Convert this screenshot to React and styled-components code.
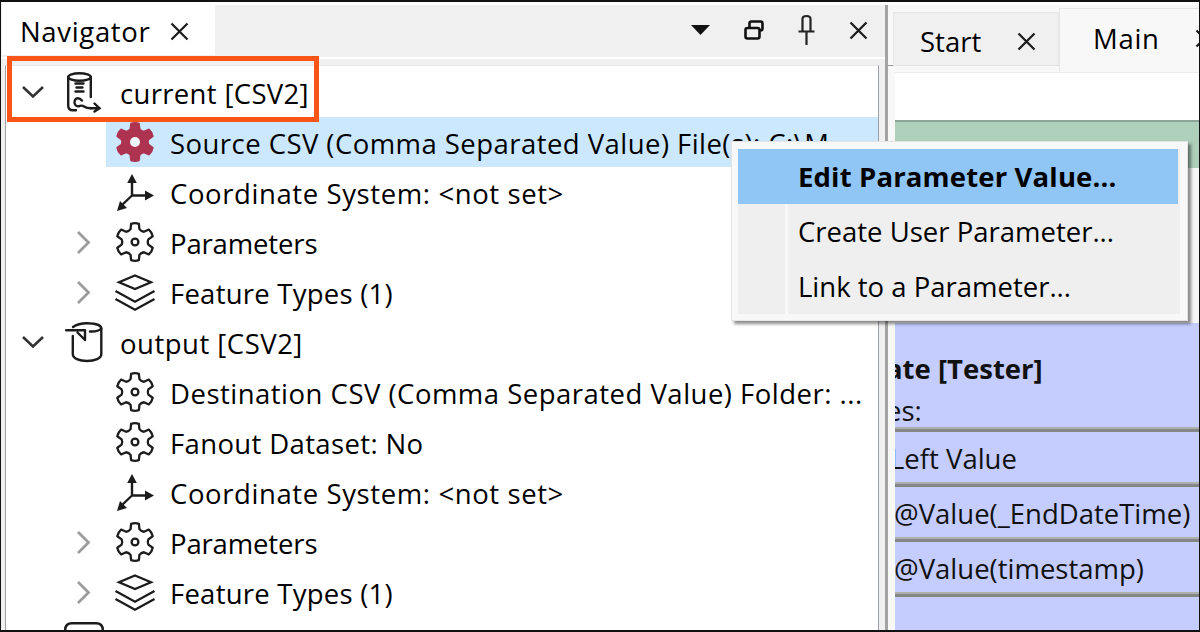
import React from "react";
import styled, { createGlobalStyle } from "styled-components";

const Global = createGlobalStyle`
  html, body { margin: 0; padding: 0; background: #fff; }
  #root { width: 1200px; height: 632px; overflow: hidden; }
`;

const Screen = styled.div`
  position: relative;
  box-sizing: border-box;
  width: 1200px;
  height: 632px;
  overflow: hidden;
  display: flex;
  border-top: 2px solid #111;
  border-left: 1px solid #111;
  border-right: 1px solid #111;
  border-bottom: 2px solid #111;
  background: #fff;
  font-family: "Open Sans", "Noto Sans", sans-serif;
  font-size: 27.5px;
  color: #000;
`;

const LeftPanel = styled.section`
  width: 884px;
  flex: none;
  margin-top: 3px;
  display: flex;
  flex-direction: column;
  background: #f0f0f0;
`;

const DockBar = styled.header`
  height: 50px;
  flex: none;
  display: flex;
  padding-left: 1px;
`;

const NavTab = styled.div`
  width: 213px;
  height: 50px;
  display: flex;
  align-items: center;
  padding: 3px 0 0 18px;
  box-sizing: border-box;
  background: #fff;
  gap: 20px;
  letter-spacing: 0.66px;
`;

const DockTools = styled.div`
  margin-left: auto;
  display: flex;
  align-items: center;
  padding-right: 17px;
  gap: 34px;
`;

const Hairline = styled.div`
  height: 2px;
  flex: none;
  margin-top: 2px;
  background: #fff;
`;

const TreeFrame = styled.div`
  flex: 1;
  min-height: 0;
  margin: 6px 6px 0 4px;
  border-left: 1px solid #a0a0a0;
  border-top: 1px solid #e8e8e8;
  border-right: 1px solid #9aa0a6;
  background: #fff;
  padding-top: 1px;
`;

const Row = styled.div`
  height: 50px;
  display: flex;
  align-items: center;
  white-space: nowrap;
  padding-left: ${(p) => p.$indent}px;
`;

const Expander = styled.span`
  width: 38px;
  height: 50px;
  flex: none;
  display: flex;
  align-items: center;
  justify-content: center;
`;

const RowBody = styled.div`
  height: 50px;
  flex: 1;
  min-width: 0;
  display: flex;
  align-items: center;
  background: ${(p) => (p.$selected ? "#cce8ff" : "transparent")};
  padding-left: ${(p) => p.$pad || 0}px;
`;

const IconSlot = styled.span`
  width: ${(p) => p.$w}px;
  flex: none;
  display: flex;
  align-items: center;
`;

const Label = styled.span`
  white-space: nowrap;
  padding-top: 3px;
  letter-spacing: ${(p) => p.$track || 0}px;
`;

const Splitter = styled.div`
  width: 3px;
  flex: none;
  margin-top: 3px;
  background: #a3a3a3;
`;

const RightPanel = styled.section`
  flex: 1;
  min-width: 0;
  margin-top: 3px;
  display: flex;
  flex-direction: column;
  background: #f8f8f8;
  overflow: hidden;
`;

const TabStrip = styled.div`
  height: 61px;
  flex: none;
  box-sizing: border-box;
  display: flex;
  align-items: flex-end;
  padding-left: 5px;
  border-bottom: 1px solid #e2e2e2;
`;

const TabNotch = styled.span`
  flex: none;
  width: 5px;
  height: 1px;
  margin: 0 0 -1px -5px;
  background: #999;
`;

const StartTab = styled.div`
  width: 166px;
  height: 53px;
  box-sizing: border-box;
  flex: none;
  background: #f0f0f0;
  border: 1px solid #e6e6e6;
  border-bottom: 0;
  display: flex;
  align-items: center;
  padding: 5px 0 0 26px;
  gap: 36px;
`;

const MainTab = styled.div`
  flex: 1;
  height: 64px;
  margin-bottom: -7px;
  position: relative;
  box-sizing: border-box;
  background: #f8f8f8;
  border-left: 1px solid #e6e6e6;
  border-top: 1px solid #e6e6e6;
  display: flex;
  align-items: center;
  padding: 0 0 5px 33px;
  gap: 35px;
  white-space: nowrap;
  letter-spacing: 0.7px;
`;

const Canvas = styled.div`
  flex: 1;
  min-height: 0;
  margin: 6px 0 0 7px;
  background: #fff;
  display: flex;
  flex-direction: column;
  overflow: hidden;
  box-shadow: inset 0 1px 0 #ececec;
`;

const Gap = styled.div`
  height: 48px;
  flex: none;
`;

const GreenBar = styled.div`
  height: 48px;
  box-sizing: border-box;
  flex: none;
  background: #aecfba;
  border-top: 2px solid #8aa595;
`;

const PaleBand = styled.div`
  height: 155px;
  flex: none;
  background: #f6f6f6;
`;

const Transformer = styled.div`
  flex: 1;
  min-height: 0;
  background: #c4cdfe;
  color: #111;
  white-space: nowrap;
`;

const TransTitle = styled.div`
  margin: 27px 0 0 -9px;
  height: 38px;
  line-height: 38px;
  font-weight: 700;
`;

const TransSub = styled.div`
  margin: 6px 0 0 -9px;
  height: 33px;
  line-height: 33px;
`;

const TransRow = styled.div`
  height: 55px;
  box-sizing: border-box;
  border-top: 2px solid #aeaeae;
  box-shadow: inset 0 3px 0 #868686;
  display: flex;
  align-items: center;
  padding-top: 6px;
`;

const TransText = styled.span`
  margin-left: ${(p) => p.$shift}px;
`;

const LastRule = styled.div`
  height: 3px;
  border-top: 2px solid #aeaeae;
  background: #868686;
`;

const Callout = styled.div`
  position: absolute;
  left: 6px;
  top: 54px;
  width: 312px;
  height: 66px;
  box-sizing: border-box;
  border: 5px solid #fa5517;
  pointer-events: none;
`;

const Menu = styled.div`
  position: absolute;
  left: 730px;
  top: 139px;
  width: 457px;
  height: 180px;
  box-sizing: border-box;
  background: #f8f8f8;
  border: 1px solid #e4e4e4;
  box-shadow: 3px 3px 3px rgba(0, 0, 0, 0.45);
  padding: 7px 7px 6px 6px;
`;

const MenuInner = styled.div`
  height: 100%;
  background: #efefef;
  position: relative;
`;

const MenuGutter = styled.div`
  position: absolute;
  left: 47px;
  top: 0;
  bottom: 0;
  width: 3px;
  background: #f8f8f8;
`;

const MenuItem = styled.div`
  position: relative;
  height: 55px;
  display: flex;
  align-items: center;
  padding-left: 60px;
  box-sizing: border-box;
  width: ${(p) => (p.$active ? "440px" : "auto")};
  background: ${(p) => (p.$active ? "#90c6f6" : "transparent")};
  font-weight: ${(p) => (p.$active ? 700 : 400)};
  letter-spacing: ${(p) => (p.$active ? 0.15 : 0)}px;
  white-space: nowrap;
`;

const Svg = styled.svg`
  display: block;
  flex: none;
  overflow: visible;
`;

const Close = ({ size = 19 }) => (
  <Svg width={size} height={size} viewBox="0 0 19 19" fill="none" stroke="#1a1a1a" strokeWidth="2.2">
    <path d="M1.500 1.500 17.500 17.500M17.500 1.500 1.500 17.500" />
  </Svg>
);

const ChevronDown = () => (
  <Svg width="22" height="12" viewBox="0 0 22 12" fill="none" stroke="#333" strokeWidth="2.6">
    <path d="M1 1 11 10.500 21 1" />
  </Svg>
);

const ChevronRight = () => (
  <Svg width="13" height="23" viewBox="0 0 13 23" fill="none" stroke="#9c9c9c" strokeWidth="2.8">
    <path d="M1 1 11.500 11.500 1 22" />
  </Svg>
);

const gearPath = (() => {
  const pt = (r, deg) => {
    const a = (deg * Math.PI) / 180;
    return `${(20 + r * Math.cos(a)).toFixed(2)} ${(20 + r * Math.sin(a)).toFixed(2)}`;
  };
  let d = "";
  for (let k = 0; k < 6; k += 1) {
    const c = -90 + 60 * k;
    d += `${k === 0 ? "M" : "L"}${pt(13.6, c - 19)} `;
    d += `L${pt(18.6, c - 12)} Q${pt(19.6, c)} ${pt(18.6, c + 12)} L${pt(13.6, c + 19)} `;
    d += `Q${pt(12.2, c + 30)} ${pt(13.6, c + 41)} `;
  }
  return `${d}Z`;
})();

const Gear = () => (
  <Svg width="40" height="40" viewBox="0 0 40 40" fill="none" stroke="#1c1c1c" strokeWidth="2.3" strokeLinejoin="round">
    <path d={gearPath} />
    <circle cx="20" cy="20" r="3.400" />
  </Svg>
);

const SolidGear = () => (
  <Svg width="40" height="40" viewBox="0 0 40 40">
    <path d={gearPath} fill="#ad3350" stroke="#ad3350" strokeWidth="2" strokeLinejoin="round" />
    <circle cx="20" cy="20" r="5" fill="#f0f5fa" />
  </Svg>
);

const Axes = () => (
  <Svg width="40" height="40" viewBox="0 0 40 40">
    <path d="M17 10V23.500H31M17 23.500 7 33" fill="none" stroke="#1c1c1c" strokeWidth="2.400" />
    <path d="M17 2 21.800 11H12.200zM39 23.500 30 28.500V18.500zM2 39 5 29 12 36z" fill="#1c1c1c" />
  </Svg>
);

const Layers = () => (
  <Svg width="40" height="37" viewBox="0 0 40 37" fill="none" stroke="#1c1c1c" strokeWidth="2.300">
    <path d="M20 1.500 36 8.200 20 15 4 8.200z" />
    <path d="M0.500 17 20 27.800 39.500 17M0.500 25 20 35.800 39.500 25" />
  </Svg>
);

const DbSource = () => (
  <Svg width="34" height="40" viewBox="0 0 34 40" fill="none" stroke="#1c1c1c" strokeWidth="2.400" strokeLinecap="round">
    <ellipse cx="12.500" cy="5" rx="11.300" ry="3.800" />
    <path d="M1.200 5V33.500C1.200 36.500 3 38.300 6 38.300H9M23.800 5V25" />
    <path d="M8.500 11.500H16.500M9.500 15.500H15.500M8.500 19.500H16.500" />
    <path d="M15 28.500C12.500 25.500 9 25.500 7.800 28.500C6.500 32 9 35 12.500 34C14 33.500 15 33 17 34.500C19 36 21 36.300 24 36.300" />
    <path d="M24 36.300H32.500M27.500 31.500 32.500 36.300 27.500 39.500" />
  </Svg>
);

const DbDest = () => (
  <Svg width="38" height="40" viewBox="0 0 38 40" fill="none" stroke="#1c1c1c" strokeWidth="2.400" strokeLinecap="round" strokeLinejoin="round">
    <path d="M8 5C12 2 17 1.200 22 1.200C30 1.200 36.300 3 36.300 6.500V32C36.300 36.500 30 39 22 39C14 39 7.800 36.500 7.800 32V14" />
    <path d="M25 9.500C30 9.800 34 8.800 36.300 6.500" />
    <path d="M1.200 8.300H20V18M12.500 10.500 20 18" />
  </Svg>
);

const DbPartial = () => (
  <Svg width="40" height="40" viewBox="3 0 40 40" fill="none" stroke="#1c1c1c" strokeWidth="2.400">
    <path d="M1.200 40V8C1.200 3.500 3.500 1.200 8 1.200H32C36.500 1.200 38.800 3.500 38.800 8V40" />
  </Svg>
);

const Caret = () => (
  <Svg width="19" height="10" viewBox="0 0 19 10">
    <path d="M0 0H19L9.500 10z" fill="#111" />
  </Svg>
);

const Restore = () => (
  <Svg width="20" height="20" viewBox="0 0 20 20" fill="none" stroke="#111" strokeWidth="2.600">
    <rect x="5.500" y="1.500" width="13" height="9" rx="2" />
    <rect x="1.500" y="8" width="14" height="10.500" rx="2" fill="#f0f0f0" />
  </Svg>
);

const Pin = () => (
  <Svg width="17" height="30" viewBox="0 0 17 30" fill="none" stroke="#222" strokeWidth="2.200">
    <path d="M4.500 16V4c0-2 1.700-3 4-3s4 1 4 3V16M0.500 16.500H16.500M8.500 17V30" />
  </Svg>
);

const trees = [
  { kind: "parent", icon: <DbSource />, text: "current [CSV2]", track: 0.33, pad: 15, slot: 53 },
  { kind: "leaf", icon: <SolidGear />, text: "Source CSV (Comma Separated Value) File(s): C:\\M...", track: 0.45, selected: true },
  { kind: "leaf", icon: <Axes />, text: "Coordinate System: <not set>", track: 0.6 },
  { kind: "branch", icon: <Gear />, text: "Parameters", track: -0.15 },
  { kind: "branch", icon: <Layers />, text: "Feature Types (1)", track: 0.24 },
  { kind: "parent", icon: <DbDest />, text: "output [CSV2]", track: 0.5, pad: 13, slot: 55 },
  { kind: "leaf", icon: <Gear />, text: "Destination CSV (Comma Separated Value) Folder: ...", track: 0.49 },
  { kind: "leaf", icon: <Gear />, text: "Fanout Dataset: No", track: 0.36 },
  { kind: "leaf", icon: <Axes />, text: "Coordinate System: <not set>", track: 0.6 },
  { kind: "branch", icon: <Gear />, text: "Parameters", track: -0.15 },
  { kind: "branch", icon: <Layers />, text: "Feature Types (1)", track: 0.24 },
  { kind: "parent", icon: <DbPartial />, text: "", pad: 15, slot: 53 },
];

const TreeRow = ({ item }) => {
  if (item.kind === "parent") {
    return (
      <Row $indent={8}>
        <Expander>{item.text ? <ChevronDown /> : null}</Expander>
        <RowBody $pad={item.pad}>
          <IconSlot $w={item.slot}>{item.icon}</IconSlot>
          <Label $track={item.track}>{item.text}</Label>
        </RowBody>
      </Row>
    );
  }
  if (item.kind === "branch") {
    return (
      <Row $indent={58}>
        <Expander><ChevronRight /></Expander>
        <RowBody $pad={13}>
          <IconSlot $w={55}>{item.icon}</IconSlot>
          <Label $track={item.track}>{item.text}</Label>
        </RowBody>
      </Row>
    );
  }
  return (
    <Row $indent={100}>
      <RowBody $selected={item.selected} $pad={9}>
        <IconSlot $w={55}>{item.icon}</IconSlot>
        <Label $track={item.track}>{item.text}</Label>
      </RowBody>
    </Row>
  );
};

export default function App() {
  return (
    <>
      <Global />
      <Screen>
        <LeftPanel>
          <DockBar>
            <NavTab>
              Navigator <Close />
            </NavTab>
            <DockTools>
              <Caret />
              <Restore />
              <Pin />
              <Close />
            </DockTools>
          </DockBar>
          <Hairline />
          <TreeFrame>
            {trees.map((item, i) => (
              <TreeRow key={i} item={item} />
            ))}
          </TreeFrame>
        </LeftPanel>
        <Splitter />
        <RightPanel>
          <TabStrip>
            <TabNotch />
            <StartTab>Start <Close /></StartTab>
            <MainTab>Main <Close /></MainTab>
          </TabStrip>
          <Canvas>
            <Gap />
            <GreenBar />
            <PaleBand />
            <Transformer>
              <TransTitle>ate [Tester]</TransTitle>
              <TransSub>es:</TransSub>
              <TransRow><TransText $shift={-5}>Left Value</TransText></TransRow>
              <TransRow><TransText $shift={-1}>@Value(_EndDateTime)</TransText></TransRow>
              <TransRow><TransText $shift={-1}>@Value(timestamp)</TransText></TransRow>
              <LastRule />
            </Transformer>
          </Canvas>
        </RightPanel>
        <Callout />
        <Menu>
          <MenuInner>
            <MenuGutter />
            <MenuItem $active>Edit Parameter Value...</MenuItem>
            <MenuItem>Create User Parameter...</MenuItem>
            <MenuItem>Link to a Parameter...</MenuItem>
          </MenuInner>
        </Menu>
      </Screen>
    </>
  );
}
